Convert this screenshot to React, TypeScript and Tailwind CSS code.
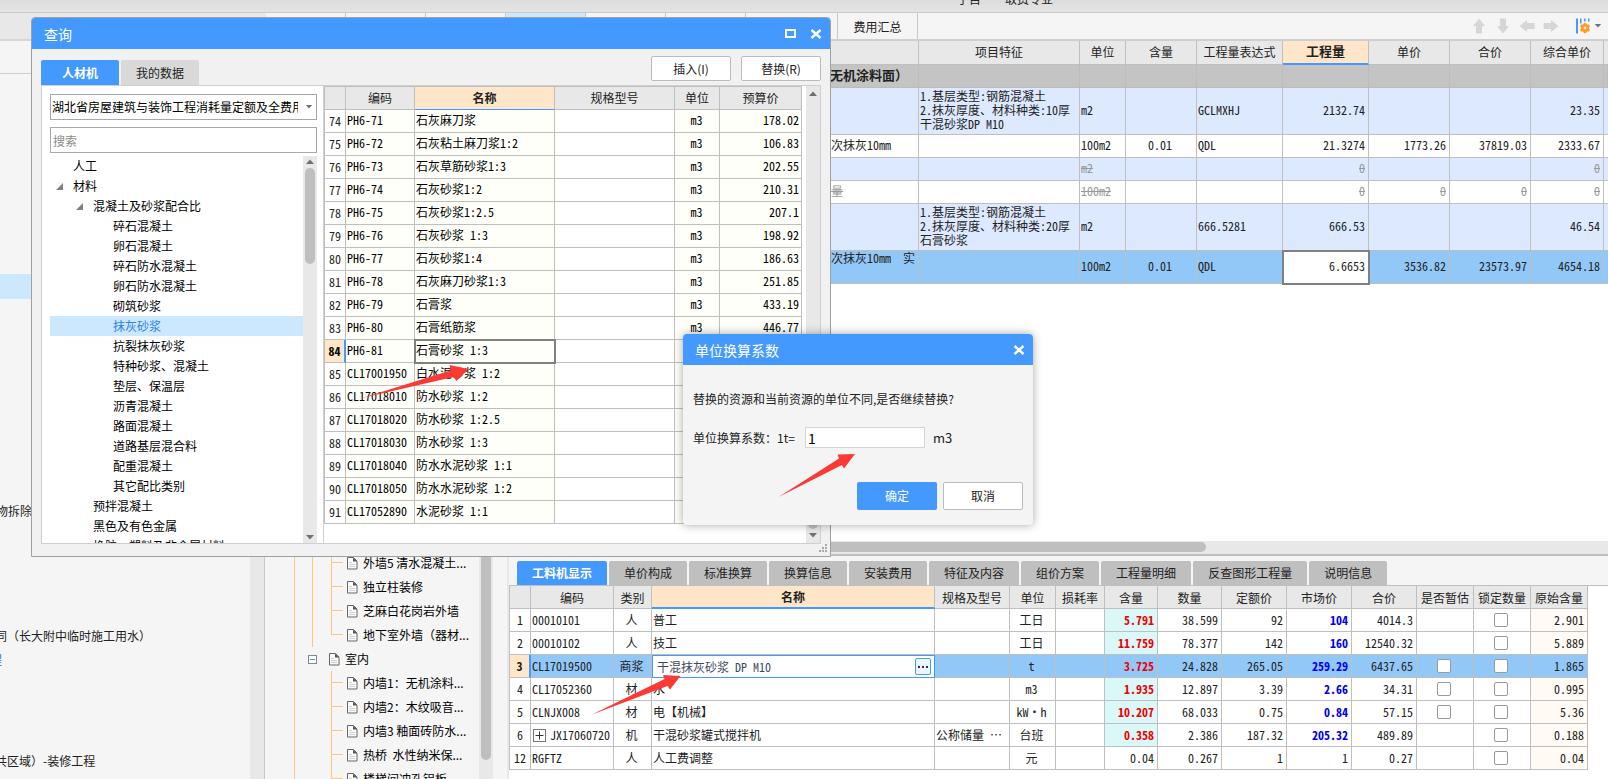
import React from 'react';

const GRID = "font-['Noto_Sans_Mono_CJK_SC','Noto_Sans_CJK_SC',monospace] text-xs text-[#222]";

function Caret({ dir, className }: { dir: 'up' | 'down'; className?: string }) {
  return (
    <svg viewBox="0 0 10 5" className={className ?? 'h-[5px] w-[10px]'} fill="#6f6f7a" aria-hidden="true">
      <path d={dir === 'up' ? 'M5 0.5 9 5H1Z' : 'M1 0h8L5 4.5Z'} />
    </svg>
  );
}

function CloseIcon() {
  return (
    <svg viewBox="0 0 12 10" className="h-[10px] w-3" stroke="#fff" strokeWidth="2.4" fill="none" aria-hidden="true">
      <path d="M1.5 1 10.5 9M10.5 1 1.5 9" />
    </svg>
  );
}

function DocIcon() {
  return (
    <svg viewBox="0 0 11 13" className="h-[13px] w-[11px] shrink-0" fill="none" aria-hidden="true">
      <path d="M0.5 0.5h6l3.500 3.500v8h-9.500v-11.500Z" fill="#fafafa" stroke="#666" />
      <path d="M6 0.5 10 4.500h-4Z" fill="#555" />
      <path d="M2 5.500h3M2 7.500h6M2 9.500h6" stroke="#d0d0d0" />
    </svg>
  );
}

/* ---------- left project pane ---------- */

function ProjectPane() {
  return (
    <aside className="relative flex w-[266px] shrink-0 flex-col overflow-hidden bg-[#f5f5f5] text-xs text-[#222]">
      <div className="h-7 border-b-2 border-[#d6d6d6] bg-[#e8e8e8]" />
      <div className="h-[33px] border-b border-[#cfcfcf]" />
      <div className="flex grow">
        <div className="grow overflow-hidden whitespace-nowrap">
          <div className="mt-[200px] h-[25px] bg-[#cce8ff]" />
          <p className="-ml-1 mt-[200px] h-6 leading-6">物拆除</p>
          <p className="-ml-[5px] mt-[101px] h-6 leading-6">同（长大附中临时施工用水）</p>
          <p className="-ml-[10px] h-6 leading-6 text-[#1a6fd0]">程</p>
          <p className="-ml-[5px] mt-[77px] h-6 leading-6">共区域）-装修工程</p>
        </div>
        <div className="w-[14px] bg-[#e8e8e8]" />
        <div className="w-[2px] border-l border-[#c8c8c8] bg-[#f5f5f5]" />
      </div>
    </aside>
  );
}

/* ---------- middle unit tree ---------- */

const outer = ['外墙5 清水混凝土...', '独立柱装修', '芝麻白花岗岩外墙', '地下室外墙（器材...'];
const inner = ['内墙1：无机涂料...', '内墙2：木纹吸音...', '内墙3 釉面砖防水...', '热桥  水性纳米保...', '楼梯间冲孔铝板...'];

function TreeLeaf({ text, last }: { text: string; last?: boolean }) {
  return (
    <li className="flex h-6 items-center">
      <span className="flex h-full w-3 flex-col">
        <span className="h-3 border-b border-l border-[#ffc680]" />
        <span className={last ? 'grow' : 'grow border-l border-[#ffc680]'} />
      </span>
      <span className="ml-1 flex items-center gap-[5px] whitespace-pre">
        <DocIcon />
        {text}
      </span>
    </li>
  );
}

function UnitTree() {
  return (
    <div className="flex w-[241px] shrink-0 bg-[#f5f5f5] text-xs text-black">
      <div className="flex grow overflow-hidden pt-[510px]">
        <div className="ml-7 w-[18px] shrink-0 border-l border-[#ffc680]" />
        <div className="grow">
          <ul className="border-l border-[#ffc680] pl-[18px]">
            {outer.map((t, i) => (
              <TreeLeaf key={t} text={t} last={i === outer.length - 1} />
            ))}
          </ul>
          <div className="-ml-1 flex h-6 items-center">
            <span className="flex size-[9px] items-center justify-center border border-[#888] bg-white">
              <span className="h-px w-[5px] bg-[#2aa5dd]" />
            </span>
            <span className="ml-3 flex items-center gap-[5px]">
              <DocIcon />
              室内
            </span>
          </div>
          <ul className="pl-[19px]">
            {inner.map((t) => (
              <TreeLeaf key={t} text={t} />
            ))}
          </ul>
        </div>
      </div>
      <div className="flex w-[14px] shrink-0 justify-center bg-[#e8e8e8]">
        <div className="mt-60 h-[479px] w-[10px] rounded-full bg-[#bfbfbf]" />
      </div>
      <div className="w-[14px] shrink-0" />
    </div>
  );
}

/* ---------- quantity table ---------- */

type QRow = { h: string; tone: string; cells: string[]; struck?: boolean; focus?: boolean };

const qRows: QRow[] = [
  { h: 'h-[47px]', tone: 'bg-[#dde9ff]', cells: ['', '1.基层类型:钢筋混凝土\n2.抹灰厚度、材料种类:10厚干混砂浆DP M10', 'm2', '', 'GCLMXHJ', '2132.74', '', '', '23.35'] },
  { h: 'h-[23px]', tone: 'bg-white', cells: ['次抹灰10mm', '', '100m2', '0.01', 'QDL', '21.3274', '1773.26', '37819.03', '2333.67'] },
  { h: 'h-[23px]', tone: 'bg-[#dde9ff]', struck: true, cells: ['', '', 'm2', '', '', '0', '', '', '0'] },
  { h: 'h-[23px]', tone: 'bg-white', struck: true, cells: ['量', '', '100m2', '', '', '0', '0', '0', '0'] },
  { h: 'h-[47px]', tone: 'bg-[#dde9ff]', cells: ['', '1.基层类型:钢筋混凝土\n2.抹灰厚度、材料种类:20厚石膏砂浆', 'm2', '', '666.5281', '666.53', '', '', '46.54'] },
  { h: 'h-[33px]', tone: 'bg-[#92c8f8]', focus: true, cells: ['次抹灰10mm　实', '', '100m2', '0.01', 'QDL', '6.6653', '3536.82', '23573.97', '4654.18'] },
];

const qHeads = ['名称', '项目特征', '单位', '含量', '工程量表达式', '工程量', '单价', '合价', '综合单价'];

function QuantityTable() {
  return (
    <table className={`${GRID} w-full table-fixed border-separate border-spacing-0`}>
      <colgroup>
        <col className="w-[410px]" />
        <col className="w-[161px]" />
        <col className="w-[46px]" />
        <col className="w-[71px]" />
        <col className="w-[86px]" />
        <col className="w-[86px]" />
        <col className="w-[81px]" />
        <col className="w-[81px]" />
        <col className="w-[73px]" />
        <col />
      </colgroup>
      <thead>
        <tr className="h-6 bg-[#e8e8e8]">
          {qHeads.map((h) => (
            <th
              key={h}
              scope="col"
              className={
                h === '工程量'
                  ? 'border-b-2 border-r border-b-[#4499ff] border-r-[#bfbfbf] bg-[#ffe6c8] p-0 pb-0.5 text-[13px] font-bold leading-4'
                  : 'border-b border-r border-[#bfbfbf] p-0 pb-0.5 font-normal leading-4'
              }
            >
              {h}
            </th>
          ))}
          <td className="border-b border-[#bfbfbf] p-0" />
        </tr>
      </thead>
      <tbody>
        <tr className="h-[23px] bg-[#c4c4c4]">
          <td className="border-b border-r border-[#bcbcbc] p-0 pb-0.5 pl-[321px] text-[13px] font-bold leading-4 whitespace-nowrap">无机涂料面）</td>
          {qHeads.map((h) => (
            <td key={h} className="border-b border-r border-[#bcbcbc] p-0" />
          ))}
        </tr>
        {qRows.map((r, ri) => (
          <tr key={ri} className={`${r.h} ${r.tone} ${r.struck ? 'text-[#999] line-through' : ''}`}>
            {r.cells.map((c, i) => {
              const edge = 'border-b border-r border-[#bfbfbf] pb-0.5 pr-[3px] pt-0 leading-[14px]';
              if (i === 0) return <td key={i} className={`${edge} pl-[322px] whitespace-nowrap ${r.focus ? 'align-top' : ''}`}>{c}</td>;
              const base = `${edge} pl-px`;
              if (i === 1) return <td key={i} className={`${base} whitespace-pre-line`}>{c}</td>;
              if (i === 3) return <td key={i} className={`${base} text-center`}>{c}</td>;
              if (i === 5 && r.focus)
                return <td key={i} className={`${base} bg-white text-right outline-2 -outline-offset-1 outline-[#808080]`}>{c}</td>;
              return <td key={i} className={`${base} ${i > 4 ? 'text-right' : ''}`}>{c}</td>;
            })}
            <td className="border-b border-[#bfbfbf] p-0" />
          </tr>
        ))}
      </tbody>
    </table>
  );
}

/* ---------- resource table ---------- */

const bottomTabs = ['工料机显示', '单价构成', '标准换算', '换算信息', '安装费用', '特征及内容', '组价方案', '工程量明细', '反查图形工程量', '说明信息'];

const rHeads = ['', '编码', '类别', '名称', '规格及型号', '单位', '损耗率', '含量', '数量', '定额价', '市场价', '合价', '是否暂估', '锁定数量', '原始含量'];

type RRow = { n: string; v: string[]; est?: boolean };
const rRows: RRow[] = [
  { n: '1', v: ['00010101', '人', '普工', '', '工日', '5.791', '38.599', '92', '104', '4014.3', '2.901'] },
  { n: '2', v: ['00010102', '人', '技工', '', '工日', '11.759', '78.377', '142', '160', '12540.32', '5.889'] },
  { n: '3', est: true, v: ['CL17019500', '商浆', '干混抹灰砂浆 DP M10', '', 't', '3.725', '24.828', '265.05', '259.29', '6437.65', '1.865'] },
  { n: '4', est: true, v: ['CL17052360', '材', '水', '', 'm3', '1.935', '12.897', '3.39', '2.66', '34.31', '0.995'] },
  { n: '5', est: true, v: ['CLNJX008', '材', '电【机械】', '', 'kW·h', '10.207', '68.033', '0.75', '0.84', '57.15', '5.36'] },
  { n: '6', v: ['JX17060720', '机', '干混砂浆罐式搅拌机', '公称储量 …', '台班', '0.358', '2.386', '187.32', '205.32', '489.89', '0.188'] },
  { n: '12', v: ['RGFTZ', '人', '人工费调整', '', '元', '0.04', '0.267', '1', '1', '0.27', '0.04'] },
];

function Tick({ label }: { label: string }) {
  return (
    <input
      type="checkbox"
      aria-label={label}
      className="mx-auto block size-[14px] appearance-none rounded-[2px] border border-[#999] bg-white"
    />
  );
}

function ResourceTable() {
  const cell = 'border-b border-r border-[#bfbfbf] py-0 pl-px pr-[3px] leading-4 whitespace-nowrap';
  return (
    <table className={`${GRID} w-[1079px] table-fixed border-separate border-spacing-0 border-l border-[#bfbfbf] bg-white`}>
      <colgroup>
        <col className="w-[21px]" />
        <col className="w-[83px]" />
        <col className="w-[38px]" />
        <col className="w-[283px]" />
        <col className="w-[75px]" />
        <col className="w-[46px]" />
        <col className="w-[49px]" />
        <col className="w-[53px]" />
        <col className="w-[64px]" />
        <col className="w-[65px]" />
        <col className="w-[65px]" />
        <col className="w-[65px]" />
        <col className="w-[57px]" />
        <col className="w-[57px]" />
        <col className="w-[57px]" />
      </colgroup>
      <thead>
        <tr className="h-[23px] bg-[#e8e8e8]">
          {rHeads.map((h, i) => (
            <th
              key={i}
              scope="col"
              className={
                h === '名称'
                  ? 'border-b-2 border-r border-b-[#4499ff] border-r-[#bfbfbf] bg-[#ffe6c8] p-0 font-bold leading-4'
                  : 'border-b border-r border-[#bfbfbf] p-0 pt-0.5 font-normal leading-4 whitespace-nowrap'
              }
            >
              {h}
            </th>
          ))}
        </tr>
      </thead>
      <tbody>
        {rRows.map((r) => {
          const on = r.n === '3';
          const plain = r.n === '12';
          return (
            <tr key={r.n} className={on ? 'h-[23px] bg-[#92c8f8]' : 'h-[23px]'}>
              <th
                scope="row"
                className={
                  on
                    ? 'border-b border-r-2 border-b-[#bfbfbf] border-r-[#4499ff] bg-[#ffe6c8] p-0 font-bold leading-4'
                    : 'border-b border-r border-[#bfbfbf] p-0 font-normal leading-4'
                }
              >
                {r.n}
              </th>
              <td className={cell}>
                {r.n === '6' ? (
                  <span className="flex items-center gap-1 pl-px">
                    <button type="button" aria-label="展开" className="flex size-[13px] items-center justify-center border border-[#777] bg-white">
                      <svg viewBox="0 0 9 9" className="size-[9px]" stroke="#333" aria-hidden="true">
                        <path d="M0.5 4.5h8M4.5 0.5v8" />
                      </svg>
                    </button>
                    {r.v[0]}
                  </span>
                ) : (
                  r.v[0]
                )}
              </td>
              <td className={`${cell} text-center`}>{r.v[1]}</td>
              {on ? (
                <td className="border border-[#4499ff] bg-white py-0 pl-1 pr-[3px] text-[#3d4a5c]">
                  <span className="flex items-center">
                    <input aria-label="名称" defaultValue={r.v[2]} className="h-4 min-w-0 grow bg-white leading-4 outline-none" />
                    <button type="button" aria-label="更多" className="flex h-[17px] w-4 items-center justify-center gap-0.5 rounded-[2px] border border-[#4a9fe0] bg-[#eaf4fd]">
                      <span className="size-0.5 bg-[#334]" />
                      <span className="size-0.5 bg-[#334]" />
                      <span className="size-0.5 bg-[#334]" />
                    </button>
                  </span>
                </td>
              ) : (
                <td className={cell}>{r.v[2]}</td>
              )}
              <td className={cell}>{r.v[3]}</td>
              <td className={`${cell} text-center`}>{r.v[4]}</td>
              <td className={cell} />
              <td className={`${cell} text-right ${plain ? '' : 'font-bold text-[#f00000]'} ${plain || on ? '' : 'bg-[#daf8f8]'}`}>{r.v[5]}</td>
              <td className={`${cell} text-right`}>{r.v[6]}</td>
              <td className={`${cell} text-right`}>{r.v[7]}</td>
              <td className={`${cell} text-right ${plain ? '' : 'font-bold text-[#0000f0]'}`}>{r.v[8]}</td>
              <td className={`${cell} text-right`}>{r.v[9]}</td>
              <td className={cell}>{r.est && <Tick label="是否暂估" />}</td>
              <td className={cell}>
                <Tick label="锁定数量" />
              </td>
              <td className={`${cell} text-right ${on ? '' : 'bg-[#fffaf4]'}`}>{r.v[10]}</td>
            </tr>
          );
        })}
      </tbody>
    </table>
  );
}

/* ---------- toolbar ---------- */

function Toolbar() {
  const arrows = [
    { label: '上移', rot: '' },
    { label: '下移', rot: 'rotate-180' },
    { label: '左移', rot: '-rotate-90' },
    { label: '右移', rot: 'rotate-90' },
  ];
  return (
    <div className="flex items-center">
      <div className="flex gap-2">
        {arrows.map((a) => (
          <button key={a.label} type="button" aria-label={a.label} className="flex size-4 items-center justify-center">
            <svg viewBox="0 0 16 16" className={`size-4 ${a.rot}`} fill="#d6d6d6" aria-hidden="true">
              <path d="M8 0.5 14 8H11V15.5H5V8H2Z" />
            </svg>
          </button>
        ))}
      </div>
      <button type="button" aria-label="列设置" className="ml-[17px] flex items-center gap-1">
        <svg viewBox="0 0 14 16" className="h-4 w-[14px]" aria-hidden="true">
          <path d="M0 0.500h2v15H0zM4 0.500h1.500v5H4zM8 0.500h1.500v3H8zM12 0.500h1.500v3H12z" fill="#4499ff" />
          <g fill="#ff9c1c">
            <circle cx="9" cy="10" r="4" />
            <circle cx="9" cy="6.300" r="1.600" />
            <circle cx="9" cy="13.700" r="1.600" />
            <circle cx="5.800" cy="8.100" r="1.600" />
            <circle cx="12.200" cy="8.100" r="1.600" />
            <circle cx="5.800" cy="11.900" r="1.600" />
            <circle cx="12.200" cy="11.900" r="1.600" />
          </g>
          <circle cx="9" cy="10" r="1.400" fill="#f5f5f5" />
        </svg>
        <Caret dir="down" className="h-1 w-2" />
      </button>
    </div>
  );
}

/* ---------- query window ---------- */

type Node = { t: string; pad: string; open?: boolean; on?: boolean };
const P1 = 'pl-[23px]';
const P2 = 'pl-[43px]';
const P3 = 'pl-[63px]';
const nodes: Node[] = [
  { t: '人工', pad: P1 },
  { t: '材料', pad: 'pl-[6px]', open: true },
  { t: '混凝土及砂浆配合比', pad: 'pl-[26px]', open: true },
  { t: '碎石混凝土', pad: P3 },
  { t: '卵石混凝土', pad: P3 },
  { t: '碎石防水混凝土', pad: P3 },
  { t: '卵石防水混凝土', pad: P3 },
  { t: '砌筑砂浆', pad: P3 },
  { t: '抹灰砂浆', pad: P3, on: true },
  { t: '抗裂抹灰砂浆', pad: P3 },
  { t: '特种砂浆、混凝土', pad: P3 },
  { t: '垫层、保温层', pad: P3 },
  { t: '沥青混凝土', pad: P3 },
  { t: '路面混凝土', pad: P3 },
  { t: '道路基层混合料', pad: P3 },
  { t: '配重混凝土', pad: P3 },
  { t: '其它配比类别', pad: P3 },
  { t: '预拌混凝土', pad: P2 },
  { t: '黑色及有色金属', pad: P2 },
  { t: '橡胶、塑料及非金属材料', pad: P2 },
];

const mats: [string, string, string, string][] = [
  ['74', 'PH6-71', '石灰麻刀浆', '178.02'],
  ['75', 'PH6-72', '石灰粘土麻刀浆1:2', '106.83'],
  ['76', 'PH6-73', '石灰草筋砂浆1:3', '202.55'],
  ['77', 'PH6-74', '石灰砂浆1:2', '210.31'],
  ['78', 'PH6-75', '石灰砂浆1:2.5', '207.1'],
  ['79', 'PH6-76', '石灰砂浆 1:3', '198.92'],
  ['80', 'PH6-77', '石灰砂浆1:4', '186.63'],
  ['81', 'PH6-78', '石灰麻刀砂浆1:3', '251.85'],
  ['82', 'PH6-79', '石膏浆', '433.19'],
  ['83', 'PH6-80', '石膏纸筋浆', '446.77'],
  ['84', 'PH6-81', '石膏砂浆 1:3', ''],
  ['85', 'CL17001950', '白水泥砂浆 1:2', ''],
  ['86', 'CL17018010', '防水砂浆 1:2', ''],
  ['87', 'CL17018020', '防水砂浆 1:2.5', ''],
  ['88', 'CL17018030', '防水砂浆 1:3', ''],
  ['89', 'CL17018040', '防水水泥砂浆 1:1', ''],
  ['90', 'CL17018050', '防水水泥砂浆 1:2', ''],
  ['91', 'CL17052890', '水泥砂浆 1:1', ''],
];

function MaterialTable() {
  const cell = 'border-b border-r border-[#bfbfbf] pb-0.5 pl-px pr-0.5 pt-0 leading-4 whitespace-nowrap';
  const th = 'border-b border-r border-[#bfbfbf] bg-[#e8e8e8] p-0 font-normal leading-4';
  return (
    <table className={`${GRID} w-[478px] table-fixed border-separate border-spacing-0 border-l border-t border-[#bfbfbf]`}>
      <colgroup>
        <col className="w-[21px]" />
        <col className="w-[69px]" />
        <col className="w-[140px]" />
        <col className="w-[120px]" />
        <col className="w-[45px]" />
        <col className="w-[82px]" />
      </colgroup>
      <thead>
        <tr className="h-[23px]">
          <th className={th} />
          <th scope="col" className={th}>编码</th>
          <th scope="col" className="border-b border-r border-b-[#4499ff] border-r-[#bfbfbf] bg-[#ffe6c8] p-0 font-bold leading-4">名称</th>
          <th scope="col" className={th}>规格型号</th>
          <th scope="col" className={th}>单位</th>
          <th scope="col" className={th}>预算价</th>
        </tr>
      </thead>
      <tbody className="text-black">
        {mats.map(([n, code, name, price]) => {
          const on = n === '84';
          return (
            <tr key={n} className="h-[23px] bg-[#fffffa]">
              <th
                scope="row"
                className={
                  on
                    ? 'border-b border-r-2 border-b-[#bfbfbf] border-r-[#4499ff] bg-[#ffe6c8] p-0 font-bold leading-4'
                    : 'border-b border-r border-[#bfbfbf] bg-white p-0 font-normal leading-4 text-[#222]'
                }
              >
                {n}
              </th>
              <td className={cell}>{code}</td>
              <td className={on ? `${cell} outline-2 -outline-offset-1 outline-[#808080]` : cell}>{name}</td>
              <td className={`${cell} bg-white`} />
              <td className={`${cell} text-center`}>m3</td>
              <td className={`${cell} text-right`}>{price}</td>
            </tr>
          );
        })}
      </tbody>
    </table>
  );
}

function QueryWindow() {
  return (
    <section aria-label="查询" className="absolute left-[31px] top-[17px] flex w-[800px] flex-col rounded-t-[4px] border border-[#a0a0a0] bg-[#f1f1f1] text-xs">
      <header className="flex h-[31px] items-center justify-between rounded-t-[3px] bg-[#4499ff] px-3 text-sm text-white">
        <h2>查询</h2>
        <div className="mr-[-4px] flex items-center gap-[14px]">
          <button type="button" aria-label="最大化" className="h-[9px] w-[11px] border-2 border-white" />
          <button type="button" aria-label="关闭">
            <CloseIcon />
          </button>
        </div>
      </header>
      <div className="flex h-9 items-end justify-between px-[9px]">
        <div className="flex gap-0.5" role="tablist">
          <button type="button" role="tab" className="h-[25px] w-[78px] rounded-t-[2px] bg-[#4499ff] font-bold text-white">人材机</button>
          <button type="button" role="tab" className="h-[25px] w-[78px] rounded-t-[2px] bg-[#d9d9d9] text-[#222]">我的数据</button>
        </div>
        <div className="mb-1 flex gap-[10px] text-[#222]">
          <button type="button" className="h-[25px] w-20 rounded-[2px] border border-[#bbb] bg-white">插入(I)</button>
          <button type="button" className="h-[25px] w-20 rounded-[2px] border border-[#bbb] bg-white">替换(R)</button>
        </div>
      </div>
      <div className="mx-[9px] mb-3 flex h-[459px] border border-[#cfcfcf] bg-white">
        <div className="flex w-[282px] shrink-0 flex-col border-r border-[#cfcfcf] pl-2 pr-[6px] pt-2 text-black">
          <div className="relative">
            <select aria-label="定额库" className="h-[26px] w-full appearance-none overflow-hidden rounded-none border border-[#a8a8a8] bg-white pl-px pr-[18px]">
              <option>湖北省房屋建筑与装饰工程消耗量定额及全费用基价表</option>
            </select>
            <Caret dir="down" className="pointer-events-none absolute right-1 top-[11px] h-1 w-2" />
          </div>
          <input aria-label="搜索" placeholder="搜索" className="mt-[7px] h-[26px] shrink-0 border border-[#a8a8a8] bg-white px-0.5 placeholder:text-[#8a8a8a]" />
          <div className="mt-[3px] flex min-h-0 grow overflow-hidden">
            <ul className="min-w-0 grow overflow-hidden">
              {nodes.map((n) => (
                <li key={n.t} className={`flex h-5 items-center ${n.pad} ${n.on ? 'bg-[#cce8ff] text-[#2a82e4]' : ''}`}>
                  {n.open && (
                    <svg viewBox="0 0 7 7" className="mr-[10px] size-[7px] shrink-0" fill="#808080" aria-hidden="true">
                      <path d="M7 0v7H0Z" />
                    </svg>
                  )}
                  {n.t}
                </li>
              ))}
            </ul>
            <div className="flex w-[14px] shrink-0 flex-col items-center bg-[#e8e8e8] py-[3px]">
              <Caret dir="up" />
              <div className="mt-1 h-24 w-[10px] rounded-full bg-[#bfbfbf]" />
              <Caret dir="down" className="mt-auto h-[5px] w-[10px]" />
            </div>
          </div>
        </div>
        <div className="grow">
          <MaterialTable />
        </div>
        <div className="flex w-[14px] shrink-0 flex-col items-center bg-[#e8e8e8] py-[5px]">
          <Caret dir="up" />
          <div className="mb-1 mt-auto h-24 w-[10px] rounded-full bg-[#bfbfbf]" />
          <Caret dir="down" />
        </div>
      </div>
      <svg viewBox="0 0 9 9" className="absolute bottom-[3px] right-[2px] size-[9px]" fill="#a8a8a8" aria-hidden="true">
        <path d="M6 0h2v2H6zM3 3h2v2H3zM6 3h2v2H6zM0 6h2v2H0zM3 6h2v2H3zM6 6h2v2H6z" />
      </svg>
    </section>
  );
}

/* ---------- unit conversion dialog ---------- */

function UnitDialog() {
  return (
    <section role="dialog" aria-label="单位换算系数" className="absolute left-[683px] top-[334px] w-[350px] rounded-[4px] bg-[#f4f4f4] pb-[15px] text-xs text-[#222] shadow-[0_0_10px_rgba(0,0,0,0.35)]">
      <header className="flex h-[31px] items-center justify-between rounded-t-[4px] bg-[#4499ff] pl-3 pr-2 text-sm text-white">
        <h2>单位换算系数</h2>
        <button type="button" aria-label="关闭">
          <CloseIcon />
        </button>
      </header>
      <div className="px-[10px]">
        <p className="mt-6 h-5 leading-5">替换的资源和当前资源的单位不同,是否继续替换?</p>
        <div className="mt-[18px] flex h-[21px] items-center">
          <label htmlFor="factor" className="w-28">单位换算系数：1t=</label>
          <input id="factor" defaultValue="1" className="h-[21px] w-[120px] border border-[#d4d4d4] bg-white px-0.5 text-sm text-black" />
          <span className="ml-2 text-[13px]">m3</span>
        </div>
        <div className="mt-[34px] flex justify-end gap-[6px]">
          <button type="button" className="h-7 w-20 rounded-[2px] bg-[#4499ff] text-white">确定</button>
          <button type="button" className="h-7 w-20 rounded-[2px] border border-[#bbb] bg-white">取消</button>
        </div>
      </div>
    </section>
  );
}

function Pointers() {
  return (
    <svg viewBox="0 0 1608 779" className="pointer-events-none absolute left-0 top-0 h-[779px] w-[1608px]" fill="#fb3a36" aria-hidden="true">
      <path d="M362 398 450.500 370.500 449.500 365 468.500 369 456.500 381 453.500 377Z" />
      <path d="M778.500 497 839 458.500 837.500 454.500 855 454 844 468.500 842 465Z" />
      <path d="M592 714.500 664.500 679 663 675 680.500 676 670 689.500 667.500 686Z" />
    </svg>
  );
}

export default function App() {
  return (
    <main className="relative flex h-screen min-h-[779px] flex-col overflow-hidden bg-white font-['Noto_Sans_CJK_SC',sans-serif]">
      <div className="flex h-[13px] shrink-0 items-end overflow-hidden border-b border-[#cacaca] bg-gradient-to-b from-[#dcdcdc] to-[#e4e4e4] pb-[5px] pl-[957px] text-xs leading-4 text-[#222]">
        <span>子目</span>
        <span className="ml-6">取费专业</span>
      </div>
      <div className="flex min-h-0 grow">
        <ProjectPane />
        <div className="flex min-w-0 grow flex-col">
          <div className="flex h-7 shrink-0 items-center justify-between border-b-2 border-[#cfcfcf] bg-[#f5f5f5] pr-[6px] text-xs text-[#222]">
            <nav className="flex h-full">
              {['w-20', 'w-20', 'w-20', 'w-20 bg-[#cce8ff]', 'w-20', 'w-20', 'w-[92px]'].map((w, i) => (
                <span key={i} className={`border-r border-[#c8c8c8] ${w}`} />
              ))}
              <a href="#summary" className="flex w-20 items-center justify-center border-r border-[#c8c8c8] pt-0.5">费用汇总</a>
            </nav>
            <Toolbar />
          </div>
          <div className="flex min-h-0 grow overflow-hidden">
            <UnitTree />
            <div className="flex min-w-0 grow flex-col border-l-2 border-[#e8e8e8]">
              <div className="h-[500px] shrink-0 bg-white">
                <QuantityTable />
              </div>
              <div className="h-[15px] shrink-0 border-b-2 border-[#bfbfbf] bg-[#e8e8e8] pt-px">
                <div className="h-[10px] w-[697px] rounded-r-full bg-[#bfbfbf]" />
              </div>
              <div className="flex h-[29px] shrink-0 items-start gap-0.5 bg-[#f5f5f5] pl-2 pt-[5px] text-xs text-[#222]" role="tablist">
                {bottomTabs.map((t, i) => (
                  <button
                    key={t}
                    type="button"
                    role="tab"
                    className={
                      i === 0
                        ? 'h-6 rounded-t-[2px] bg-[#4499ff] px-[15px] font-bold text-white'
                        : 'h-6 rounded-t-[2px] bg-[#bfbfbf] px-[15px]'
                    }
                  >
                    {t}
                  </button>
                ))}
              </div>
              <div className="grow border-t border-[#bfbfbf] bg-white">
                <ResourceTable />
              </div>
            </div>
          </div>
        </div>
      </div>
      <QueryWindow />
      <UnitDialog />
      <Pointers />
    </main>
  );
}
